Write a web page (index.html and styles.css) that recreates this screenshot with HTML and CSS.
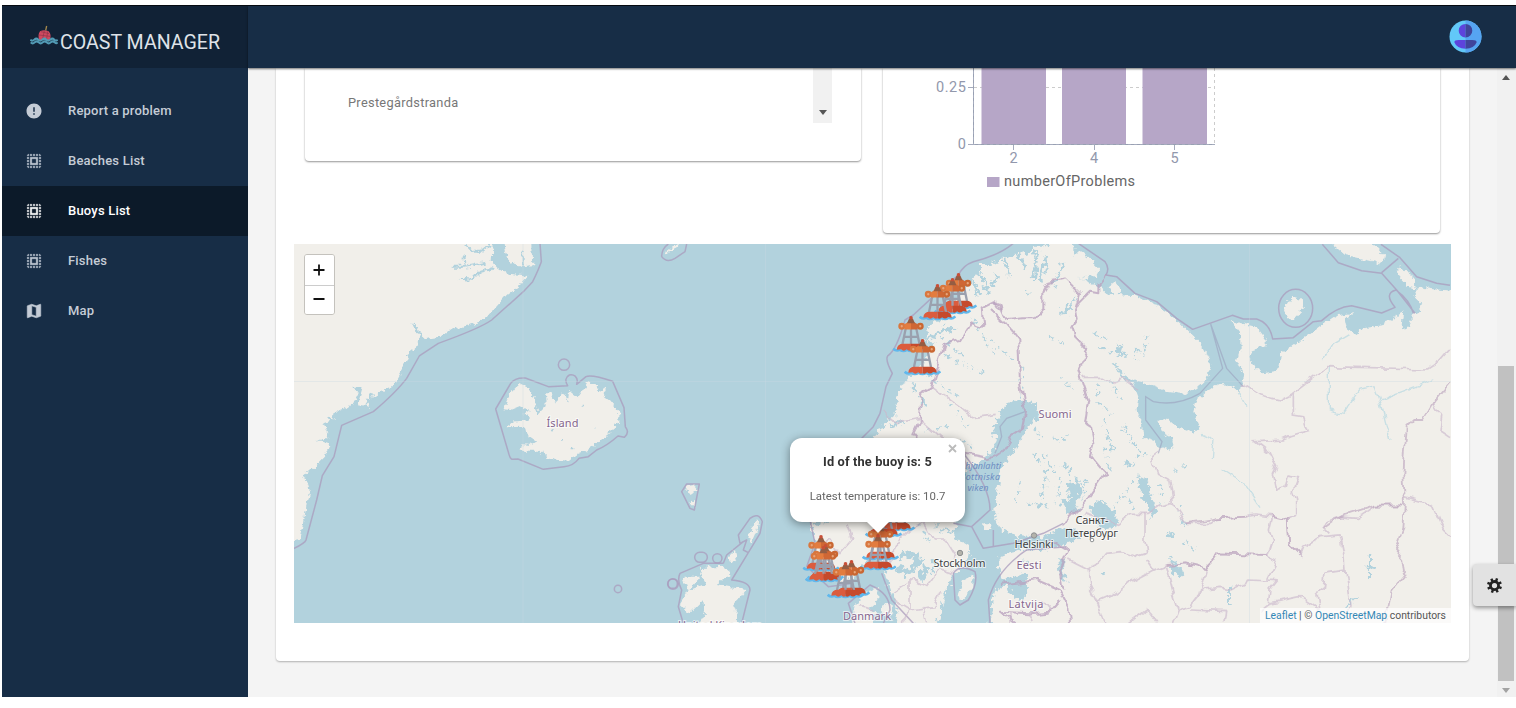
FILE: index.html
```
<!DOCTYPE html>
<html lang="en">
<head>
<meta charset="utf-8">
<title>Coast Manager</title>
<link rel="stylesheet" href="styles.css">
</head>
<body>
<svg class="defs" width="0" height="0">
  <symbol id="select-all" viewBox="0 0 24 24"><path d="M3 5h2V3c-1.100 0-2 .9-2 2zm0 8h2v-2H3v2zm4 8h2v-2H7v2zM3 9h2V7H3v2zm10-6h-2v2h2V3zm6 0v2h2c0-1.100-.9-2-2-2zM5 21v-2H3c0 1.100.9 2 2 2zm-2-4h2v-2H3v2zM9 3H7v2h2V3zm2 18h2v-2h-2v2zm8-8h2v-2h-2v2zm0 8c1.100 0 2-.9 2-2h-2v2zm0-12h2V7h-2v2zm0 8h2v-2h-2v2zm-4 4h2v-2h-2v2zm0-16h2V3h-2v2zM7 17h10V7H7v10zm2-8h6v6H9V9z" stroke="currentColor" stroke-width=".5"/></symbol>
  <symbol id="buoy" viewBox="0 0 112 112">
    <path d="M40 38L30 86M72 38L82 86M56 38V86M32 63H80" fill="none" stroke="#9aa0ae" stroke-width="7"/>
    <path d="M2 99Q12 108 22 102Q33 110 44 102Q56 110 68 102Q79 110 90 102Q100 108 110 98" fill="none" stroke="#60b8ed" stroke-width="8"/>
    <path d="M13 102Q14 84 33 84H56V104Q49 108 43 101Q34 109 26 101Z" fill="#db5c3e"/>
    <path d="M56 84H79Q98 84 99 102L88 100Q79 109 70 101Q64 108 56 104Z" fill="#c64a2c"/>
    <circle cx="28" cy="31" r="7" fill="#e7a67d" stroke="#d9773e" stroke-width="7"/>
    <circle cx="84" cy="31" r="7" fill="#e7a67d" stroke="#c96732" stroke-width="7"/>
    <path d="M36 41V25L46 19H56V41Z" fill="#e37c3f"/><path d="M56 19H66L76 25V41H56Z" fill="#cf6735"/>
    <path d="M44 22L50 8H62L68 22Z" fill="#945d43"/><path d="M51 10V2Q56-2 61 2V10Z" fill="#c84f37"/>
  </symbol>
</svg>
<div class="app">
  <aside class="sidebar">
    <div class="brand">
      <svg class="brand-logo" viewBox="0 0 84 60"><path d="M28 45Q22 30 30 19Q42 12 56 19Q66 30 59 45Z" fill="#cf4960"/><path d="M27 30L60 34M33 20L57 26M43 17L38 42M53 19L50 42" stroke="#8f3548" stroke-width="2"/><path d="M47 16L50 3" stroke="#a68a4e" stroke-width="4"/><path d="M1 44Q7 50 13 44T25 44T37 44T49 44T61 44T73 44T83 44M2 52Q8 58 14 52T26 52T38 52T50 52T62 52T74 52T82 52" fill="none" stroke="#529bb5" stroke-width="6"/></svg>
      <span>COAST MANAGER</span>
    </div>
    <nav class="menu">
      <a class="item"><svg viewBox="0 0 24 24"><path d="M12 2C6.480 2 2 6.480 2 12s4.480 10 10 10 10-4.480 10-10S17.520 2 12 2zm1 15h-2v-2h2v2zm0-4h-2V7h2v6z"/></svg><span>Report a problem</span></a>
      <a class="item"><svg><use href="#select-all"/></svg><span>Beaches List</span></a>
      <a class="item active"><svg><use href="#select-all"/></svg><span>Buoys List</span></a>
      <a class="item"><svg><use href="#select-all"/></svg><span>Fishes</span></a>
      <a class="item"><svg viewBox="0 0 24 24"><path d="M20.500 3l-.16.03L15 5.100 9 3 3.360 4.900c-.21.07-.36.25-.36.48V20.500c0 .28.22.5.5.5l.16-.03L9 18.900l6 2.100 5.640-1.900c.21-.07.36-.25.36-.48V3.500c0-.28-.22-.5-.5-.5zM15 19l-6-2.110V5l6 2.110V19z" stroke="currentColor" stroke-width=".8"/></svg><span>Map</span></a>
    </nav>
  </aside>
  <div class="page">
    <header class="topbar">
      <svg class="avatar" viewBox="0 0 34 34"><circle cx="17" cy="17" r="16.500" fill="#62c8f8"/><path d="M17 .5a16.500 16.500 0 0 1 0 33Z" fill="#56a4f2"/><path d="M17 4a7 7 0 0 0 0 14ZM17 20.500H10Q5.500 20.500 5.500 23Q8 29.500 17 29.500Z" fill="#5d43dc"/><path d="M17 4a7 7 0 0 1 0 14ZM17 20.500H24Q28.500 20.500 28.500 23Q26 29.500 17 29.500Z" fill="#40449b"/></svg>
    </header>
    <div class="body">
      <main class="content">
        <section class="panel">
          <div class="row">
            <div class="card list-card">
              <div class="list-name">Prestegårdstranda</div>
              <div class="list-scroll"><i class="arrow down"></i></div>
            </div>
            <div class="card chart-card">
              <svg width="556" height="165" viewBox="883 68 556 165" class="chart">
                <path d="M974 87.500H1215M1214.500 68V145" stroke="#ccc" stroke-dasharray="3 3" fill="none"/>
                <path d="M973.500 68V144.500H1215M968 87.500h6M968 144.500h6M1013.500 145v5M1094.500 145v5M1174.500 145v5" stroke="#a5abbd" fill="none"/>
                <path d="M973.500 68V144.500H1215" stroke="#98a0b2" stroke-dasharray="3 3" fill="none"/>
                <path d="M981.500 68h64.500v76h-64.500zM1062 68h64v76h-64zM1142.500 68h64.500v76h-64.500zM987 177h12.500v10h-12.500z" fill="#b6a6c7"/>
                <g fill="#9298ac" font-size="14.500"><text x="966" y="92" text-anchor="end" textLength="30">0.25</text><text x="966" y="149" text-anchor="end">0</text><g text-anchor="middle"><text x="1013.500" y="163">2</text><text x="1094" y="163">4</text><text x="1174.500" y="163">5</text></g></g>
                <text x="1004" y="186" font-size="14.500" fill="#666" textLength="131">numberOfProblems</text>
              </svg>
            </div>
          </div>
          <div class="map">
            <svg class="tiles" viewBox="294 244 1157 379">
              <defs>
                <filter id="coast" x="-5%" y="-5%" width="110%" height="110%" color-interpolation-filters="sRGB"><feTurbulence type="fractalNoise" baseFrequency=".065" numOctaves="3" seed="8"/><feDisplacementMap in="SourceGraphic" scale="34" xChannelSelector="R" yChannelSelector="G"/><feGaussianBlur stdDeviation="1"/></filter>
                <filter id="rough" x="-5%" y="-5%" width="110%" height="110%" color-interpolation-filters="sRGB"><feTurbulence type="fractalNoise" baseFrequency=".06" numOctaves="3" seed="3"/><feDisplacementMap in="SourceGraphic" scale="22" xChannelSelector="R" yChannelSelector="G"/><feGaussianBlur stdDeviation=".8"/></filter>
                <filter id="wavy" x="-5%" y="-5%" width="110%" height="110%" color-interpolation-filters="sRGB"><feTurbulence type="fractalNoise" baseFrequency=".035" numOctaves="1" seed="5"/><feDisplacementMap in="SourceGraphic" scale="30" xChannelSelector="R" yChannelSelector="G"/><feGaussianBlur stdDeviation="1"/></filter>
              </defs>
              <rect x="294" y="244" width="1157" height="379" fill="#b2d2dd"/>
              <!-- Greenland, Iceland -->
              <g transform="translate(290 240) scale(.33333)">
                <g class="land" filter="url(#rough)">
                  <path d="M-30-20H725L730 75L690 80Q660 75 645 40L640 8H608L605 60Q615 85 650 100L715 108L690 135L650 165L615 205L590 235L540 255L490 265L450 290L405 297L390 285L372 248L390 290L385 315L360 335L350 360L340 385L320 420L300 440L270 458L235 480L240 500L200 492L215 440L190 440L205 465L190 495L135 515L130 540L100 550L115 590L90 605L118 615L105 650L75 680L40 710L60 740L50 790L42 850L30 900L-30 910Z"/>
                  <path d="M640 508L655 470L672 448L690 432L718 445L738 480L735 500L745 522L770 495L768 460L785 460L798 488L815 455L828 465L832 488L838 455L862 475L880 450L893 428L915 430L932 455L950 440L940 465L960 480L985 510L985 545L970 570L935 598L915 615L890 632L855 645L840 662L805 660L775 652L745 632L692 632L695 615L720 618L740 606L710 585L705 560L650 562L655 548L705 545L720 532L700 522L720 510L690 498L660 510Z"/>
                </g>
                <path class="lake" filter="url(#rough)" d="M525 14L545 35H575L600 15M520 50L525 80H485M525 80L590 68M510 115L545 120L570 95L610 85M698 30V78M215 440L200 495M250 460L225 495M370 250L395 295M130 540L110 530M100 605H80M60 720L35 710M875 497h5M820 598l-5 5M790 572l-6 4M845 625h5M915 560v5"/>
                <g class="border"><path d="M750 10L754 65Q745 90 728 125L700 155L605 240Q570 265 445 310L388 348L350 415Q320 455 250 515L155 556L132 650L97 707L80 780L48 900Q45 910 10 926"/><path d="M617 507L662 430Q675 412 706 414L775 440L833 437Q820 415 838 405Q858 402 862 422L860 433L888 410Q905 403 968 424L1002 503L1006 560Q1020 578 1003 592L984 588Q950 618 920 630L895 650L867 655Q850 678 822 680L760 688L684 657L666 658Q660 655 656 640Z"/><circle cx="822" cy="374" r="17"/><circle cx="984" cy="1047" r="11"/><circle cx="1149" cy="1032" r="16"/></g>
              </g>
              <!-- Scandinavia and Russia -->
              <g transform="translate(1000 240) scale(.33333)">
                <g class="land" filter="url(#rough)">
                  <path d="M-30 75L20 50L50 60L70 30L85 50L100 20L130 20L150 55L170 20L200 20L215 55L240 30L270 55L300 85L290 105L250 118L225 108L300 140L320 160L345 165L325 140L345 125L362 150L350 162L400 165L450 185L500 215L540 250L580 290L610 320L625 350L632 380L618 420L590 445L550 462L500 455L450 435L410 425L370 405L345 375L360 405L400 430L415 470L410 510L425 550L430 590L460 600L475 620L510 632L523 615L520 595L490 580L475 545L500 535L530 560L580 578L600 560L580 515L590 480L640 440L660 430L700 445L718 460L722 440L733 405L710 365L722 330L720 275L695 243L770 260L800 300L800 315L765 325L748 350L765 385L790 400L835 392L840 340L870 325L880 315L920 290L980 245L1010 225L1060 220L1035 240L1040 265L1070 285L1090 265L1150 255L1210 215L1205 260L1220 270L1235 235L1260 215L1265 190L1240 165L1255 140L1300 148L1400 155V1200H-60V75Z"/>
                  <path d="M1000 15L1040 0L1100-10L1155 50L1140 70L1080 55L1035 45ZM1200 82L1230 100L1250 145L1225 140L1188 98ZM875 170L905 180L915 205L885 235L860 235L852 210Z"/>
                </g>
              </g>
              <g transform="translate(640 240) scale(.33333)">
                <g filter="url(#coast)">
                  <path class="land" d="M1260-10L1170 40L1120 45L1085 75L1100 100L1040 100L1000 115L985 140L940 190L900 240L870 260L850 310L890 310L840 380L800 420L770 470L770 520L730 555L700 600L650 620L560 680L520 760L510 820L520 880L530 960L570 1020L620 1030L660 990L690 950L730 970L745 1040L760 1080L780 1160H900L1300 1130V0Z"/>
                  <path class="water" d="M1100 490L1120 482L1190 490L1195 530L1165 560L1130 620L1085 680L1070 760L1065 830L1080 870L1130 885L1200 890L1270 865L1310 870L1320 895L1270 915L1200 930L1130 930L1080 950L1075 990L1110 1010L1160 1000L1165 1060L1140 1080L1110 1065L1100 1030L1060 1060L1050 1170H885L905 1100L920 1050L940 1000L980 970L990 920L940 890L950 860L940 800L940 720L980 690L1040 650L1070 610L1060 560Z"/>
                </g>
                <g class="land" filter="url(#rough)"><path d="M952 1070L970 1020L1000 1005L1000 1040L970 1075ZM1085 970L1110 960L1115 978L1090 985ZM1080 1000L1115 990L1120 1005L1090 1018ZM640 1170L640 1100L680 1060L715 1040L715 1080L690 1105L705 1120L690 1170ZM725 1100L755 1090L755 1120L730 1125ZM130 1010L180 1010L150 1050L200 1030L175 985L250 980L275 1000L230 1035L320 1050L280 1100L300 1160H170L195 1120L190 1080L150 1120L120 1090L145 1050ZM325 900L335 860L355 840L350 870L335 905ZM265 950L285 930L290 950L275 970ZM75 35L120 5L110 25L80 40ZM135 740L165 735L175 750L155 765ZM150 785L165 780L165 800ZM1030 850L1050 850L1055 870L1030 870Z"/></g>
                <!-- fjords and lakes -->
                <g class="lake" filter="url(#coast)">
                  <path stroke-width="9" d="M1090 60L1110 105M1020 100L1045 160M1000 120L1018 165M1070 105L1060 140M1130 35L1160 90M1190 30L1180 120M1220 50L1200 125M1270 70L1240 140M850 310L905 270L945 265M820 460V430M850 470V500M750 560L785 545M540 700L600 730M520 780L620 760M525 850L610 820M570 1010L560 960M880 1000V960"/>
                  <path stroke-dasharray="12 15" d="M900 290L980 360M920 350L1030 400M860 400L950 470M930 490L980 560M1000 240L1060 340M1050 300L1120 360M860 570L930 560M960 600L1000 620M1150 380L1140 490M890 800V880M830 820L860 900"/>
                  <path stroke-width="18" d="M775 950L810 940L840 960L800 1000L775 980M842 1020L860 980"/><path d="M900 870L970 880M915 1110L925 1040"/>
                </g>
                <path class="gulf" d="M1065 640L1085 590L1080 560L1100 535L1155 515"/>
                <g class="border">
                  <path d="M1120 10Q1080 45 1000 65Q970 75 955 105L890 160L820 225L795 240Q770 330 743 348Q735 360 757 400L738 440L720 520L700 560L660 600M510 840L525 910L500 980L565 1040L640 1030M645 1150L625 1090L690 1035Q750 1060 750 1110L730 1150M970 640Q1050 740 1050 810L995 860L940 850M995 860L1030 925L1120 910L1210 880L1270 850M1060 870V920M1050 1150L1045 1080Q1070 990 1160 930L1280 920M945 1080L940 1000Q960 970 1005 995Q1015 1030 985 1080L960 1095ZM725 1000L755 1080L820 1150"/>
                  <path d="M65 50Q65 25 85 12M65 50Q80 70 105 55L135 35L140 12M125 755L140 732H178L163 810L150 805ZM295 885L330 835Q355 815 367 845L360 880L325 938L310 930L320 900L300 910ZM250 970L260 945L310 905M325 938L275 1020Q330 1025 330 1050L305 1150M250 970H190L120 1000Q110 1020 125 1050L115 1100L130 1150"/>
                  <circle cx="98" cy="1031" r="14"/><rect x="164" y="937" width="38" height="30" rx="15"/><circle cx="232" cy="955" r="14"/>
                </g>
                <path class="border country-line" filter="url(#wavy)" d="M1085 205L1060 187L1025 205L1030 260L995 250L965 300L915 310L900 360L875 440L845 460L840 540L820 580L850 620M1050 207L1100 255L1135 300L1140 430L1155 520L1145 570L1115 590L1085 640L1045 655L970 640"/>
                <g class="region" filter="url(#wavy)"><path d="M725 510L770 550L835 535L910 600M875 440L1000 530L1070 520M970 640L990 700M620 850L635 900L600 940L570 900L540 920M700 850L740 980L780 900L810 870L850 850M850 850L880 900L920 900L950 950M760 1060L820 1020L860 1040L900 990L935 1000M760 1080L810 1110L880 1100L900 1060M810 1020V1110L790 1150M860 1150L850 1100M660 1100L700 1110"/></g>
              </g>
              <g transform="translate(1000 240) scale(.33333)">
                <g class="water" filter="url(#coast)"><path d="M270 800L300 780L340 810L358 850L330 870L290 860ZM412 705L445 725L455 775L472 805L455 835L440 790L420 760ZM510 980L535 975L550 1000L535 1015ZM500 880L515 872L522 888L505 892ZM175 960H190V1010L205 1025L180 1020ZM300 1000L315 998L312 1012ZM205 730L235 720L245 760L220 785L240 815L200 820L180 790L210 775ZM370 665L390 660L395 675L375 678ZM180 215L230 170L210 205L195 225ZM350 310L370 340L355 345Z"/></g>
                <g class="lake" filter="url(#coast)">
                  <path stroke-dasharray="14 13" d="M100 640L140 700L120 800M130 640L180 720L170 790M190 670L250 740L180 760M60 720L50 790M80 790L140 800M260 720L250 780M160 600L210 590M290 430L300 500L340 520M330 420L370 490M310 540L340 640M370 560L420 640M400 680L420 640L450 650M310 620L330 690M360 310L380 350M340 370L370 410L400 440M360 350L300 320M410 330L405 360M440 290L430 350M280 280L330 300M520 690L560 680M480 730L485 790M545 790V820M550 845L560 865M555 905L580 930M380 750L400 810M400 720L350 790M150 290L185 310M180 410L225 450M75 150L85 155M100 560L125 600"/>
                  <path d="M510 950L530 985M690 1040V1100M1100 980L1130 985M1110 950V1020M1040 1100L1070 1070M70 970L80 960"/>
                </g>
                <path filter="url(#wavy)" d="M600 580L645 600L640 660M665 690L740 740L780 800M985 380V510L1030 520L1080 450L1125 440L1140 480L1300 420M1140 480L1170 600M715 460L735 500M970 360L1000 310L1050 280" fill="none" stroke="#c8dfe4" stroke-width="4"/>
                <path class="gulf" d="M632 252L668 385L600 460Q530 500 460 485L437 470V540L486 605L475 640M632 252L680 385L730 440"/>
                <g class="border"><path d="M235 10L315 65Q330 85 318 105L350 110L405 160L470 185L530 235L578 268L697 226L730 237H770Q810 250 818 297L880 293L940 245L965 242Q1010 200 1055 197L1145 219L1185 202Q1150 160 1188 150Q1230 180 1240 220M1245 220L1190 150L1145 100L1085 92L1015 68L967 13M1143 13L1200 53L1250 110L1310 130L1350 136M1145 98L1195 55"/><ellipse cx="887" cy="205" rx="51" ry="57"/></g>
                <g class="border country-line" filter="url(#wavy)"><path d="M318 105L295 135V160L270 155L235 190L225 210L230 240L215 260L225 290L265 330L235 390L250 440L265 480L255 550L270 560L280 610L270 645L315 700L260 780L190 850M225 210L240 160L195 115L150 125L130 160V210L110 235L70 235L20 240L0 195L-20 187"/><path d="M0 1035L110 1020L180 1050L205 1100L210 1150M190 1045L180 990L205 930L150 900M60 1160L0 1115L90 1120L150 1115L180 1080"/></g>
                <g class="region" filter="url(#wavy)"><path d="M250 412H310L340 430L370 415L420 450M475 640L455 655L470 700L510 720L520 790L560 850L630 850L650 835L740 830L770 825L810 830L860 840L890 825V780L880 750L895 710L865 705L855 740L830 750L820 700L830 680L810 640L765 605L850 600L870 590L925 575L910 530L880 525V460L840 480L780 465L725 430M878 458L980 380L1280 387L1320 360L1350 325M520 790L475 800L445 820H390L350 850L250 820"/><path d="M435 820V900L440 940L410 950L370 935L320 940L300 965L265 990L205 960M265 990L270 1040L295 1090L315 1150M295 1085L330 1070L385 1030L460 990L440 960M460 990L500 975L560 970L600 980L620 985L650 940L800 945L815 900L805 870L815 830M800 945L830 960L800 1020M500 980L520 1060L535 1110L570 1100L610 1050L660 1045L690 1050L750 1020L830 1025L810 1050L805 1090M620 985L600 1060L570 1100M535 1110L520 1150M570 1110L680 1115L675 1150M860 840L865 910L900 945L910 920L960 890L1020 885L1030 930L1035 990L975 1000L970 1045L950 1060L960 1110L900 1070L805 1090L780 1110M1035 990L1050 1100L1040 1130M1210 795L1125 797L1100 815L1070 835L1020 830L980 845L970 865L985 880M1215 770L1270 785L1300 800L1330 870L1350 890M1300 490L1325 530L1320 570L1350 590M30 1120V1150M90 1120L100 1150M150 1115L130 1090M385 1150L440 1110L470 1150"/></g>
                <g class="region strong" filter="url(#wavy)"><path d="M1350 430L1300 490L1270 540L1240 540L1220 560L1210 700L1215 790L1210 870L1185 930L1210 960L1215 1000L1175 1050L1155 1150"/><path d="M815 830L860 840L865 910L900 945M560 850L650 835L740 830M500 975L560 970L620 985L650 940L800 945M970 865L1020 830L1125 797H1210"/></g>
              </g>
              <path d="M523 244V623M765.500 244V623M294 381.500H1451M1249.500 244V623" stroke="#c8dbe1" stroke-opacity=".35"/>
              <g class="places" text-anchor="middle">
                <text x="562.500" y="426.500" class="country" textLength="32">Ísland</text><text x="1055" y="418" class="country" textLength="33">Suomi</text><text x="1029" y="569" class="country" textLength="25">Eesti</text><text x="1026" y="608" class="country" textLength="35">Latvija</text><text x="867" y="619.500" class="country" textLength="48">Danmark</text><text x="720" y="629" class="country" textLength="84">United Kingdom</text>
                <text x="959.500" y="567" textLength="52">Stockholm</text><text x="1034" y="548" textLength="39">Helsinki</text><text x="1092" y="524" textLength="33">Санкт-</text><text x="1091.500" y="536.500" textLength="53">Петербург</text>
                <g class="sea"><text x="978" y="469" textLength="46">Pohjanlahti</text><text x="980" y="480" textLength="40">Bottniska</text><text x="978" y="491" textLength="21">viken</text></g>
                <g fill="#b4b3ab" stroke="#8d9092"><circle cx="960" cy="553" r="2.700"/><circle cx="1034" cy="535.500" r="2.700"/><circle cx="1092" cy="540" r="1.800" fill="#fff"/></g>
              </g>
              <g class="markers">
                <use href="#buoy" x="940" y="273" width="37" height="37"/><use href="#buoy" x="934" y="278" width="37" height="37"/><use href="#buoy" x="919" y="284" width="37" height="37"/>
                <use href="#buoy" x="892.500" y="316" width="37" height="37"/><use href="#buoy" x="904" y="339" width="37" height="37"/>
                <use href="#buoy" x="878" y="495" width="37" height="37"/><use href="#buoy" x="865" y="501" width="37" height="37"/><use href="#buoy" x="862" y="524" width="37" height="37"/><use href="#buoy" x="859.500" y="534" width="37" height="37"/>
                <use href="#buoy" x="802.500" y="535" width="37" height="37"/><use href="#buoy" x="807" y="544" width="37" height="37"/><use href="#buoy" x="805" y="546" width="37" height="37"/><use href="#buoy" x="833" y="560" width="37" height="37"/><use href="#buoy" x="827" y="562" width="37" height="37"/>
              </g>
            </svg>
            <div class="zoom"><button><svg viewBox="0 0 12 12"><path d="M6 .5v11M.5 6h11"/></svg></button><button><svg viewBox="0 0 12 12"><path d="M.5 6h11"/></svg></button></div>
            <div class="popup"><svg class="close" viewBox="0 0 9 9"><path d="M1 1l7 7M8 1L1 8"/></svg><strong>Id of the buoy is: 5</strong><span>Latest temperature is: 10.7</span></div>
            <div class="credit"><a>Leaflet</a> | © <a>OpenStreetMap</a> contributors</div>
          </div>
        </section>
      </main>
      <div class="scrollbar"><i class="arrow up"></i><div class="thumb"></div><i class="arrow down muted"></i></div>
    </div>
  </div>
  <button class="settings"><svg viewBox="0 0 16 16"><circle cx="8" cy="8" r="4.300" fill="none" stroke="#222" stroke-width="3"/><path d="M6.700 0h2.600v3H6.700zM6.700 13h2.600v3H6.700zM0 6.700h3v2.600H0zM13 6.700h3v2.600h-3z" fill="#222" transform="rotate(20 8 8)"/><path d="M6.700 0h2.600v3H6.700zM6.700 13h2.600v3H6.700zM0 6.700h3v2.600H0zM13 6.700h3v2.600h-3z" fill="#222" transform="rotate(65 8 8)"/></svg></button>
</div>
</body>
</html>
```
FILE: styles.css
```
* { box-sizing: border-box; }
body { margin: 0; background: #fff; font-family: Roboto, sans-serif; overflow: hidden; }
.defs { position: absolute; }
.app { position: relative; display: grid; grid-template-columns: 246px 1fr; height: 692px; margin: 5px 0 11px 2px; border-top: 1px solid #060b12; background: #f4f4f4; }
.sidebar { background: #172d46; color: #c5ccd6; }
.brand { display: flex; align-items: center; height: 62px; padding: 11px 0 0 28px; background: #112236; color: #dfe3e8; }
.brand-logo { width: 28px; height: 20px; align-self: flex-start; margin: 8px 2px 0 0; flex: none; }
.brand span { font-size: 19.600px; white-space: nowrap; }
.menu { padding-top: 18px; }
.item { display: flex; align-items: center; height: 50px; padding: 0 0 1px 23px; gap: 25px; font-size: 13px; letter-spacing: .2px; font-weight: 500; }
.item svg { width: 18px; height: 18px; fill: currentColor; }
.item.active { background: #0c1a29; color: #fff; }
.page { display: flex; flex-direction: column; min-width: 0; }
.topbar { position: relative; z-index: 1; display: flex; align-items: center; justify-content: flex-end; height: 62px; padding-right: 34px; background: #172d46; box-shadow: 0 1px 2px rgba(0,0,0,.55); }
.avatar { width: 33px; height: 33px; margin-top: -2px; }
.body { display: flex; height: 629px; }
.content { flex: 1; padding: 0 28px 36px; }
.panel { height: 593px; padding: 0 18px 0; border-radius: 0 0 4px 4px; background: #fff; box-shadow: 0 1px 2px rgba(0,0,0,.28); }
.row { display: flex; align-items: flex-start; gap: 22px; height: 176px; padding: 0 11px; }
.card { background: #fff; border-radius: 0 0 4px 4px; box-shadow: 0 1px 2px rgba(0,0,0,.42); }
.list-card { display: flex; justify-content: space-between; width: 556px; height: 93px; padding: 0 29px 0 43px; }
.list-name { padding-top: 27px; color: #777; font-size: 12.800px; letter-spacing: .3px; }
.list-scroll { display: flex; align-items: flex-end; justify-content: center; width: 19px; height: 55px; padding-bottom: 8px; background: #f1f1f1; }
.chart-card { width: 557px; height: 165px; }
.chart { display: block; }
.arrow { width: 0; height: 0; border: 4.500px solid transparent; }
.arrow.down { border-top: 5px solid #555; border-bottom: 0; }
.arrow.up { border-bottom: 5px solid #555; border-top: 0; }
.arrow.muted { border-top-color: #a3a3a3; }
.map { position: relative; width: 1157px; height: 379px; overflow: hidden; }
.tiles { display: block; width: 1157px; height: 379px; }
.land { fill: #f1efea; }
.water { fill: #b2d2dd; }
.lake { fill: none; stroke: #b2d2dd; stroke-width: 6; }
.border { fill: none; stroke: #a99bbc; stroke-width: 4.500; stroke-opacity: .75; stroke-linejoin: round; }
.country-line { stroke: #b8a0be; stroke-width: 6; }
.gulf { fill: none; stroke: #9da4c0; stroke-width: 4; stroke-opacity: .65; }
.region { fill: none; stroke: #cbb9cc; stroke-width: 5; stroke-opacity: .65; }
.region.strong { stroke: #bda6bf; stroke-width: 5.500; }
.places { font: 11px "Noto Sans", sans-serif; fill: #444; }
.places text { stroke: rgba(255,255,255,.65); stroke-width: 2px; paint-order: stroke; }
.places .country { fill: #86668e; }
.places .sea { font-size: 9px; font-style: italic; fill: #6e8dc2; }
.places .sea text { stroke: none; }
.zoom { position: absolute; left: 10px; top: 10px; width: 31px; height: 61px; border: 1px solid #c4c2bd; border-radius: 3px; overflow: hidden; }
.zoom button { display: flex; align-items: center; justify-content: center; width: 100%; height: 30px; padding: 0 1px 0 0; border: 0; background: #fff; }
.zoom button + button { height: 29px; padding-bottom: 2px; border-top: 1px solid #ccc; }
.zoom svg { width: 12px; height: 12px; fill: none; stroke: #111; stroke-width: 1.800; }
.popup { position: absolute; left: 496px; top: 194px; display: flex; flex-direction: column; align-items: center; width: 175px; height: 84px; padding-top: 16px; gap: 20px; border-radius: 12px; background: #fff; color: #333; font-size: 12.800px; filter: drop-shadow(0 2px 5px rgba(0,0,0,.42)); }
.popup::after { content: ""; position: absolute; left: 76px; top: 83px; border: 12px solid transparent; border-top-color: #fff; border-bottom: 0; }
.popup strong { font-weight: 700; line-height: 15px; letter-spacing: .15px; }
.popup span { color: #666; font-size: 11.400px; line-height: 14px; white-space: nowrap; }
.close { position: absolute; right: 8px; top: 6px; width: 9px; height: 9px; stroke: #bbb; stroke-width: 1.800; }
.credit { position: absolute; right: 0; bottom: 0; height: 15px; padding: 0 5px; background: rgba(255,255,255,.7); color: #555; font-size: 10.400px; line-height: 15px; white-space: nowrap; }
.credit a { color: #3387b5; }
.scrollbar { display: flex; flex-direction: column; align-items: center; width: 20px; padding: 7px 1px 4px 0; background: #f1f1f1; }
.thumb { width: 16px; height: 315px; margin: auto 0 7px; background: #c1c1c1; }
.settings { position: absolute; z-index: 2; right: 0; top: 558px; display: flex; align-items: center; width: 43px; height: 42px; padding: 0 0 0 14px; border: 0; border-radius: 4px 0 0 4px; background: #e2e2e2; box-shadow: 0 2px 4px rgba(0,0,0,.4); }
.settings svg { width: 15px; height: 15px; }
```
